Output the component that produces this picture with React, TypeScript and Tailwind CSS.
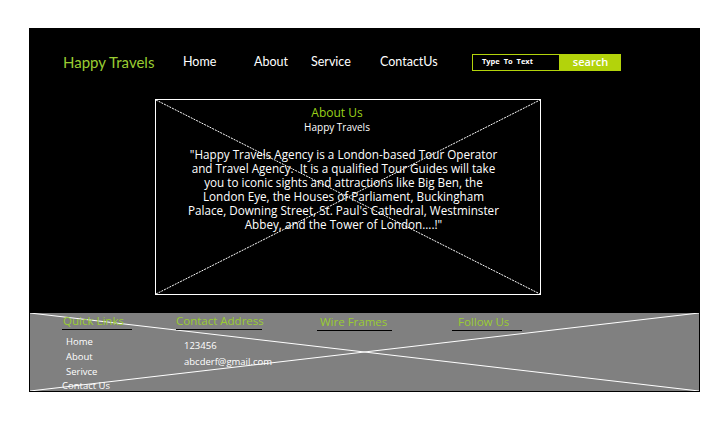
import React from "react";

const X = ({ dashed }: { dashed?: boolean }) => (
  <svg
    className="pointer-events-none absolute inset-0 h-full w-full"
    viewBox="0 0 100 100"
    preserveAspectRatio="none"
  >
    <line x1="0" y1="0" x2="100" y2="100" stroke="white" strokeWidth="1" vectorEffect="non-scaling-stroke" strokeDasharray={dashed ? "2 1" : undefined} />
    <line x1="0" y1="100" x2="100" y2="0" stroke="white" strokeWidth="1" vectorEffect="non-scaling-stroke" strokeDasharray={dashed ? "2 1" : undefined} />
  </svg>
);

export default function App() {
  return (
    <div className="h-[424px] w-[722px] bg-white pt-[28px] pl-[29px]" style={{ fontFamily: "'Open Sans', sans-serif" }}>
      <div className="flex h-[364px] w-[671px] flex-col bg-black">
        {/* header */}
        <div className="flex h-[68px] items-center" style={{ fontFamily: "Lato, 'Open Sans', sans-serif" }}>
          <div className="ml-[34px] w-[120px] text-[15px] text-[#9acd32]">Happy Travels</div>
          <div className="flex text-[12.5px] text-white">
            <span className="w-[71px]">Home</span>
            <span className="w-[57px]">About</span>
            <span className="w-[69px]">Service</span>
            <span className="w-[92px]">ContactUs</span>
          </div>
          <div className="flex h-[17px]">
            <div className="flex w-[88px] items-center border border-[#b3d30b] pl-[9px] text-[7.5px] font-bold text-white" style={{ fontFamily: "'Open Sans', sans-serif" }}>
              Type&nbsp; To&nbsp; Text
            </div>
            <div className="flex w-[61px] items-center justify-center bg-[#b3d30b] text-[11px] font-semibold text-white" style={{ fontFamily: "'Open Sans', sans-serif" }}>
              search
            </div>
          </div>
        </div>

        {/* main box */}
        <div className="relative ml-[126px] mt-[3px] h-[196px] w-[386px] border border-white">
          <X dashed />
          <div className="relative flex flex-col items-center pt-[5px] text-center">
            <div className="flex flex-col items-center pr-[22px]">
              <div className="text-[12px] leading-[16px] text-[#99d11a]">About Us</div>
              <div className="text-[10px] leading-[12px] text-white">Happy Travels</div>
            </div>
            <p className="mr-[9px] mt-[14px] w-[314px] text-[11.7px] leading-[14px] text-white">
              "Happy Travels Agency is a London-based Tour Operator and Travel Agency.&nbsp; It is a qualified Tour Guides will take you to iconic sights and attractions like Big Ben, the London Eye, the Houses of Parliament, Buckingham Palace, Downing Street, St. Paul's Cathedral, Westminster Abbey, and the Tower of London....!"
            </p>
          </div>
        </div>

        {/* footer */}
        <div className="relative mx-[1px] mt-[18px] h-[78px] bg-[#808080]">
          <X />
          <div className="relative flex h-full">
            <div className="ml-[32px] flex w-[114px] flex-col">
              <div className="w-[70px] whitespace-nowrap border-b border-black pl-[1px] text-[11.5px] leading-[16px] text-[#9acd32]">Quick Links</div>
              <div className="mt-[4px] flex flex-col text-[9.5px] leading-[15px] text-white">
                <span className="pl-[4px]">Home</span>
                <span className="pl-[4px]">About</span>
                <span className="pl-[4px]">Serivce</span>
                <span className="-mt-[1px]">Contact Us</span>
              </div>
            </div>
            <div className="flex w-[141px] flex-col">
              <div className="w-[86px] whitespace-nowrap border-b border-black text-[11.5px] leading-[16px] text-[#9acd32]">Contact Address</div>
              <div className="mt-[8px] flex flex-col pl-[8px] text-[9.5px] leading-[16px] text-white">
                <span>123456</span>
                <span>abcderf@gmail.com</span>
              </div>
            </div>
            <div className="flex w-[135px] flex-col">
              <div className="w-[75px] whitespace-nowrap border-b border-black pl-[3px] text-[11.5px] leading-[17px] text-[#9acd32]">Wire Frames</div>
            </div>
            <div className="flex flex-col">
              <div className="w-[70px] whitespace-nowrap border-b border-black pl-[6px] text-[11.5px] leading-[17px] text-[#9acd32]">Follow Us</div>
            </div>
          </div>
        </div>
      </div>
    </div>
  );
}
